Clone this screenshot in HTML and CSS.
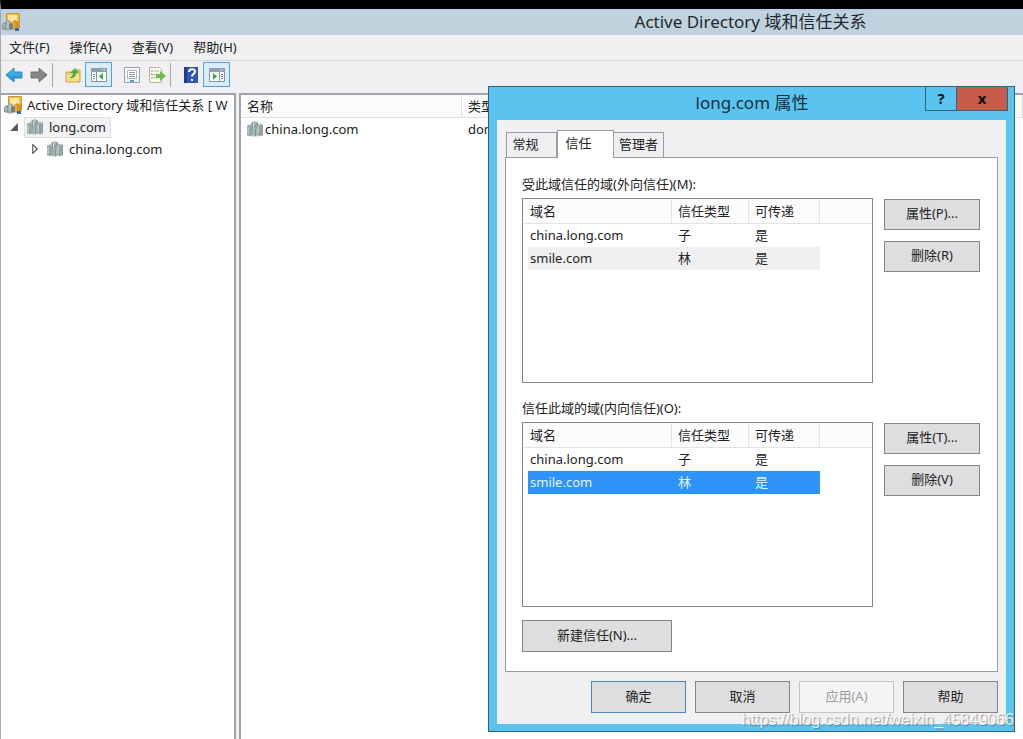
FILE: index.html
```html
<!DOCTYPE html>
<html lang="zh-CN">
<head>
<meta charset="utf-8">
<title>Active Directory 域和信任关系</title>
<link rel="stylesheet" href="styles.css">
</head>
<body>
<svg class="defs" aria-hidden="true">
  <defs>
    <linearGradient id="steel" x1="0" x2="1"><stop offset="0" stop-color="#7d8b8f"/><stop offset=".5" stop-color="#b9c6c8"/><stop offset="1" stop-color="#7c8b8c"/></linearGradient>
    <linearGradient id="blue" x1="0" y1="0" x2="0" y2="1"><stop offset="0" stop-color="#5cc0f2"/><stop offset="1" stop-color="#1683cf"/></linearGradient>
  </defs>
  <symbol id="domain" viewBox="0 0 16 16">
    <path d="M4.500 1.500l3-1.500 3.500 1.500V12l-3 1.500-3.500-1.500z" fill="url(#steel)"/>
    <path d="M0 5l3-2 3 1.500V14L3 15.500 0 14z" fill="url(#steel)"/>
    <path d="M10 4l3-1.500L16 4v10l-3 1.500-3-1.500z" fill="url(#steel)"/>
    <path d="M3 5v10M8 3v6M13 5v10" stroke="#7b898c"/>
    <path d="M1 6v7M6.500 2.500v4M11 5v8" stroke="#d3dddd"/>
    <path d="M5.500 8l2-1.500L10 8v7.500H5.500z" fill="#a3bcb6"/>
    <path d="M8.500 8v7" stroke="#799189"/>
  </symbol>
  <symbol id="console" viewBox="0 0 18 18">
    <path d="M4.500 .5h13v14h-13z" fill="#f0bd42" stroke="#c8962c"/>
    <path d="M6 2h9v8H6z" fill="#fde9a0"/>
    <path d="M10 9l3-2 4 2v7l-4 1-3-1z" fill="#d9901c"/>
    <path d="M12 9v7" stroke="#f6c65c"/>
    <path d="M13 15h4v3h-4z" fill="#2f6cb3"/>
    <path d="M0 11l3-2 3 1v6l-3 1-3-1z" fill="#87979b"/>
    <path d="M4 9l2-2 3 1v8l-3 2-2-1z" fill="#9dadae"/>
    <path d="M7 11l2-1 2 1v5l-2 1-2-1z" fill="#708087"/>
    <path d="M2 11v4M6 9v6" stroke="#ced8d9"/>
  </symbol>
</svg>
<div class="desktop">
  <header class="titlebar">
    <svg class="icon18"><use href="#console"/></svg>
    <h1>Active Directory 域和信任关系</h1>
  </header>
  <nav class="menubar">
    <button>文件(F)</button><button>操作(A)</button><button>查看(V)</button><button>帮助(H)</button>
  </nav>
  <div class="toolbar">
    <button aria-label="后退"><svg viewBox="0 0 18 18"><path d="M1 9l8-7v4h8v6H9v4z" fill="url(#blue)" stroke="#2988c4"/></svg></button>
    <button aria-label="前进"><svg viewBox="0 0 18 18"><path d="M17 9l-8-7v4H1v6h8v4z" fill="#858687" stroke="#737475"/></svg></button>
    <span class="sep"></span>
    <button class="gap" aria-label="向上"><svg viewBox="0 0 18 18"><path d="M2 6h8l2-2h4v12H2z" fill="#f1cf75" stroke="#cda64b"/><path d="M3 9h12v6H3z" fill="#fbdf91"/><path d="M5 12c3-1 4-3 4-5H6l5-5 4 5h-3c0 3-2 6-7 5z" fill="#4fae35"/></svg></button>
    <button class="on" aria-label="显示控制台树"><svg viewBox="0 0 18 18"><path d="M1.500 2.500h15v13h-15z" fill="#f8fafb" stroke="#8793a0"/><path d="M1 2h16v4H1z" fill="#929dab"/><path d="M12 4h1M14 4h1" stroke="#fff"/><path d="M6.500 6v9" stroke="#8793a0"/><path d="M3 8.500h2M3 10.500h2M3 12.500h2" stroke="#6686a8"/><path d="M13 7v7l-4-3.500z" fill="#3ba936"/></svg></button>
    <button class="gap" aria-label="属性"><svg viewBox="0 0 18 18"><path d="M1.500 1.500h15v15h-15z" fill="#f4f6f8" stroke="#98a1a9"/><path d="M4.500 4.500h9v8h-9z" fill="#fff" stroke="#acb4bb"/><path d="M6 6.500h6M6 8.500h6M6 10.500h6" stroke="#8a99a8"/><path d="M7 15h4" stroke="#42a1d5" stroke-width="2"/></svg></button>
    <button aria-label="导出列表"><svg viewBox="0 0 18 18"><path d="M1.500 1.500h10l2 2v13h-12z" fill="#fffbea" stroke="#b8b39f"/><path d="M3 5h2M3 8.500h2M3 12h2" stroke="#777"/><path d="M6 5h5M6 8.500h4M6 12h3" stroke="#aaa9a2"/><path d="M8 8h4V5l6 5-6 5v-3H8z" fill="#67bd49"/></svg></button>
    <span class="sep"></span>
    <button class="gap" aria-label="帮助"><svg viewBox="0 0 18 18"><path d="M2 1h14v16H2z" fill="#3155b5"/><path d="M2 1h3v16H2z" fill="#203d8b"/><path d="M7 6c0-4 6-3.500 6-.5 0 2.500-3 2.500-3 5M10 13v2" fill="none" stroke="#fff" stroke-width="2"/></svg></button>
    <button class="on" aria-label="显示操作窗格"><svg viewBox="0 0 18 18"><path d="M1.500 2.500h15v13h-15z" fill="#f8fafb" stroke="#8793a0"/><path d="M1 2h16v4H1z" fill="#929dab"/><path d="M12 4h1M14 4h1" stroke="#fff"/><path d="M11.500 6v9" stroke="#8793a0"/><path d="M13 8.500h2M13 10.500h2M13 12.500h2" stroke="#6686a8"/><path d="M5 7v7l4-3.500z" fill="#3ba936"/></svg></button>
  </div>
  <main class="panes">
    <aside class="tree">
      <div class="node root"><svg class="icon18"><use href="#console"/></svg><span>Active Directory 域和信任关系 [ W</span></div>
      <div class="node"><svg class="twist" viewBox="0 0 9 9"><path d="M8 1v7H1z" fill="#555"/></svg><span class="picked"><svg class="icon16"><use href="#domain"/></svg>long.com</span></div>
      <div class="node child"><svg class="twist" viewBox="0 0 9 9"><path d="M2.500 .5v8l4-4z" fill="#fff" stroke="#555"/></svg><svg class="icon16"><use href="#domain"/></svg>china.long.com</div>
    </aside>
    <section class="content">
      <table class="results">
        <thead><tr><th class="c-name">名称</th><th>类型</th></tr></thead>
        <tbody><tr><td><span class="cell"><svg class="icon16"><use href="#domain"/></svg>china.long.com</span></td><td>dom</td></tr></tbody>
      </table>
    </section>
  </main>

  <section class="dialog" role="dialog" aria-labelledby="dlg-title">
    <header class="dlg-head">
      <h2 id="dlg-title">long.com 属性</h2>
      <div class="caption"><button aria-label="帮助">?</button><button class="close" aria-label="关闭">x</button></div>
    </header>
    <div class="dlg-body">
      <div class="tabs" role="tablist"><button role="tab">常规</button><button class="active" role="tab" aria-selected="true">信任</button><button role="tab">管理者</button></div>
      <div class="sheet" role="tabpanel">
        <h3 id="out">受此域信任的域(外向信任)(M):</h3>
        <div class="group">
          <div class="listbox">
            <table class="trusts" aria-labelledby="out">
              <thead><tr><th class="c1">域名</th><th class="c2">信任类型</th><th class="c3">可传递</th><th></th></tr></thead>
              <tbody><tr><td>china.long.com</td><td>子</td><td>是</td></tr><tr class="dim"><td>smile.com</td><td>林</td><td>是</td></tr></tbody>
            </table>
          </div>
          <div class="side"><button class="btn">属性(P)...</button><button class="btn">删除(R)</button></div>
        </div>
        <h3 id="in">信任此域的域(内向信任)(O):</h3>
        <div class="group">
          <div class="listbox">
            <table class="trusts" aria-labelledby="in">
              <thead><tr><th class="c1">域名</th><th class="c2">信任类型</th><th class="c3">可传递</th><th></th></tr></thead>
              <tbody><tr><td>china.long.com</td><td>子</td><td>是</td></tr><tr class="sel"><td>smile.com</td><td>林</td><td>是</td></tr></tbody>
            </table>
          </div>
          <div class="side"><button class="btn">属性(T)...</button><button class="btn">删除(V)</button></div>
        </div>
        <button class="btn new">新建信任(N)...</button>
      </div>
      <footer class="actions"><button class="btn default">确定</button><button class="btn">取消</button><button class="btn" disabled>应用(A)</button><button class="btn">帮助</button></footer>
    </div>
  </section>
  <div class="watermark">https://blog.csdn.net/weixin_45849066</div>
</div>
</body>
</html>
```
FILE: styles.css
```css
* { box-sizing: border-box; }
body {
  margin: 0;
  font: 13px/20px "Noto Sans", "Noto Sans CJK SC", sans-serif;
  color: #222;
  background: #fff;
}
button { font: inherit; color: inherit; margin: 0; padding: 0; border: 0; background: none; }
h1, h2, h3 { margin: 0; font-weight: 400; }
table { border-collapse: separate; border-spacing: 0; table-layout: fixed; width: 100%; }
th { font-weight: 400; text-align: left; }
th, td { padding: 0; white-space: nowrap; overflow: hidden; }
.defs { position: absolute; width: 0; height: 0; }
.icon16 { width: 16px; height: 18px; flex: none; }
.icon18 { width: 18px; height: 18px; flex: none; }

.desktop {
  position: relative;
  min-height: 100vh;
  display: flex;
  flex-direction: column;
  overflow: hidden;
  border-top: 9px solid #000;
  border-left: 1px solid #a5a8ac;
}
.titlebar {
  display: flex;
  align-items: center;
  height: 26px;
  padding: 0 0 2px 1px;
  background: #c0d2de;
  border-top: 2px solid #b5cdea;
}
.titlebar h1 { flex: 1; padding-left: 458px; text-align: center; font-size: 17px; line-height: 22px; color: #1f272c; white-space: nowrap; }
.menubar { display: flex; gap: 20px; height: 26px; padding: 0 0 2px 8px; background: #f0eff1; border-bottom: 1px solid #d3d3d5; }
.toolbar { display: flex; align-items: center; height: 32px; padding-bottom: 5px; background: #f0eff1; }
.toolbar button { display: flex; align-items: center; justify-content: center; width: 25px; height: 25px; }
.toolbar svg { width: 18px; height: 18px; }
.toolbar .on { background: #d9ecf9; border: 1px solid #4ba3df; width: 27px; }
.toolbar .sep { width: 1px; height: 24px; margin-left: 1px; background: #a8a8a8; }
.toolbar .gap { margin-left: 7px; }

.panes { flex: 1; display: flex; background: #f0eff1; gap: 3px; }
.tree { flex: none; width: 235px; overflow: hidden; background: #fff; border-top: 2px solid #a2a4ab; border-right: 2px solid #a2a4ab; }
.node { display: flex; align-items: center; height: 22px; padding: 0 0 2px 8px; white-space: nowrap; }
.node.root { padding-left: 3px; gap: 5px; }
.node.child { padding-left: 29px; }
.node .icon16 { margin-right: 6px; }
.twist { width: 10px; height: 10px; margin-right: 7px; flex: none; }
.node .picked { display: flex; align-items: center; height: 21px; margin-left: -2px; padding: 0 4px 0 2px; background: #f2f2f4; border: 1px solid #dcdde0; }
.content { flex: 1; min-width: 0; background: #fff; border-top: 2px solid #a2a4ab; border-left: 2px solid #a2a4ab; }
.results th { height: 23px; padding-left: 6px; background: #fcfcfd; border-bottom: 1px solid #dfdfe2; border-right: 1px solid #dfdfe2; }
.results td { height: 24px; padding: 0 0 2px 6px; }
.c-name { width: 221px; }
.cell { display: flex; align-items: center; gap: 2px; }

.dialog {
  position: absolute;
  top: 77px;
  right: 8px;
  width: 527px;
  padding: 0 8px 7px;
  background: #5bc3ef;
  border: 1px solid #35627b;
}
.dlg-head { display: flex; justify-content: flex-end; height: 33px; }
.dlg-head h2 { flex: 1; padding: 5px 0 0 82px; text-align: center; font-size: 17px; line-height: 22px; color: #17303d; }
.caption { display: flex; height: 24px; margin-right: -2px; border: 1px solid #35627b; border-top: 0; }
.caption button { width: 30px; padding-bottom: 2px; font-weight: 700; font-size: 15px; line-height: 20px; color: #111; }
.caption .close { width: 51px; background: #c75c4b; border-left: 1px solid #35627b; }
.dlg-body { padding: 10px 8px 11px; background: #f0eff1; }
.tabs { display: flex; align-items: flex-end; padding-left: 1px; height: 27px; }
.tabs button { height: 25px; width: 51px; padding: 0 12px 2px 0; background: #efeef0; border: 1px solid #9b9ca3; border-bottom: 0; }
.tabs button:last-child { padding: 0 0 2px; }
.tabs .active { z-index: 1; width: 57px; height: 28px; margin: 0 -1px -1px 0; padding: 0 14px 4px 0; background: #fff; }
.sheet { padding: 16px 17px 19px 16px; background: #fff; border: 1px solid #9b9ca3; }
.sheet h3 { font-size: 13px; line-height: 20px; margin-bottom: 4px; }
.group { display: flex; gap: 11px; margin-bottom: 15px; }
.listbox { flex: 1; min-height: 185px; border: 1px solid #858790; }
.side { display: flex; flex-direction: column; gap: 10px; width: 96px; }
.btn { height: 32px; padding-bottom: 3px; background: #dedee0; border: 1px solid #858588; }
.side .btn { margin-top: 1px; height: 31px; }
.new { width: 150px; display: block; margin-top: -2px; }
.trusts th { height: 25px; padding-left: 6px; background: #fcfcfd; border-right: 1px solid #e3e3e6; border-bottom: 1px solid #e3e3e6; }
.trusts th:last-child { border-right: 0; }
.trusts td { height: 23px; padding: 0 0 1px 6px; }
.trusts th:first-child { padding-left: 7px; }
.trusts td:first-child { padding-left: 2px; border-left: 5px solid transparent; background-clip: padding-box; }
.c1 { width: 149px; }
.c2 { width: 77px; }
.c3 { width: 71px; }
.dim td { background-color: #f0eff1; }
.sel td { background-color: #2e93fb; color: #e8f4ff; }
.actions { display: flex; justify-content: flex-end; gap: 9px; padding-top: 9px; }
.actions .btn { width: 95px; }
.actions .default { border-color: #4b84b8; }
.actions .btn:disabled { color: #9b9b9e; background: #f5f4f6; border-color: #c3c3c6; }
.watermark {
  position: absolute;
  right: 9px;
  bottom: 9px;
  font: 16px/20px "Liberation Sans", sans-serif;
  color: rgba(255, 255, 255, .85);
  text-shadow: 1px 1px 1px rgba(90, 90, 90, .6);
}
```
